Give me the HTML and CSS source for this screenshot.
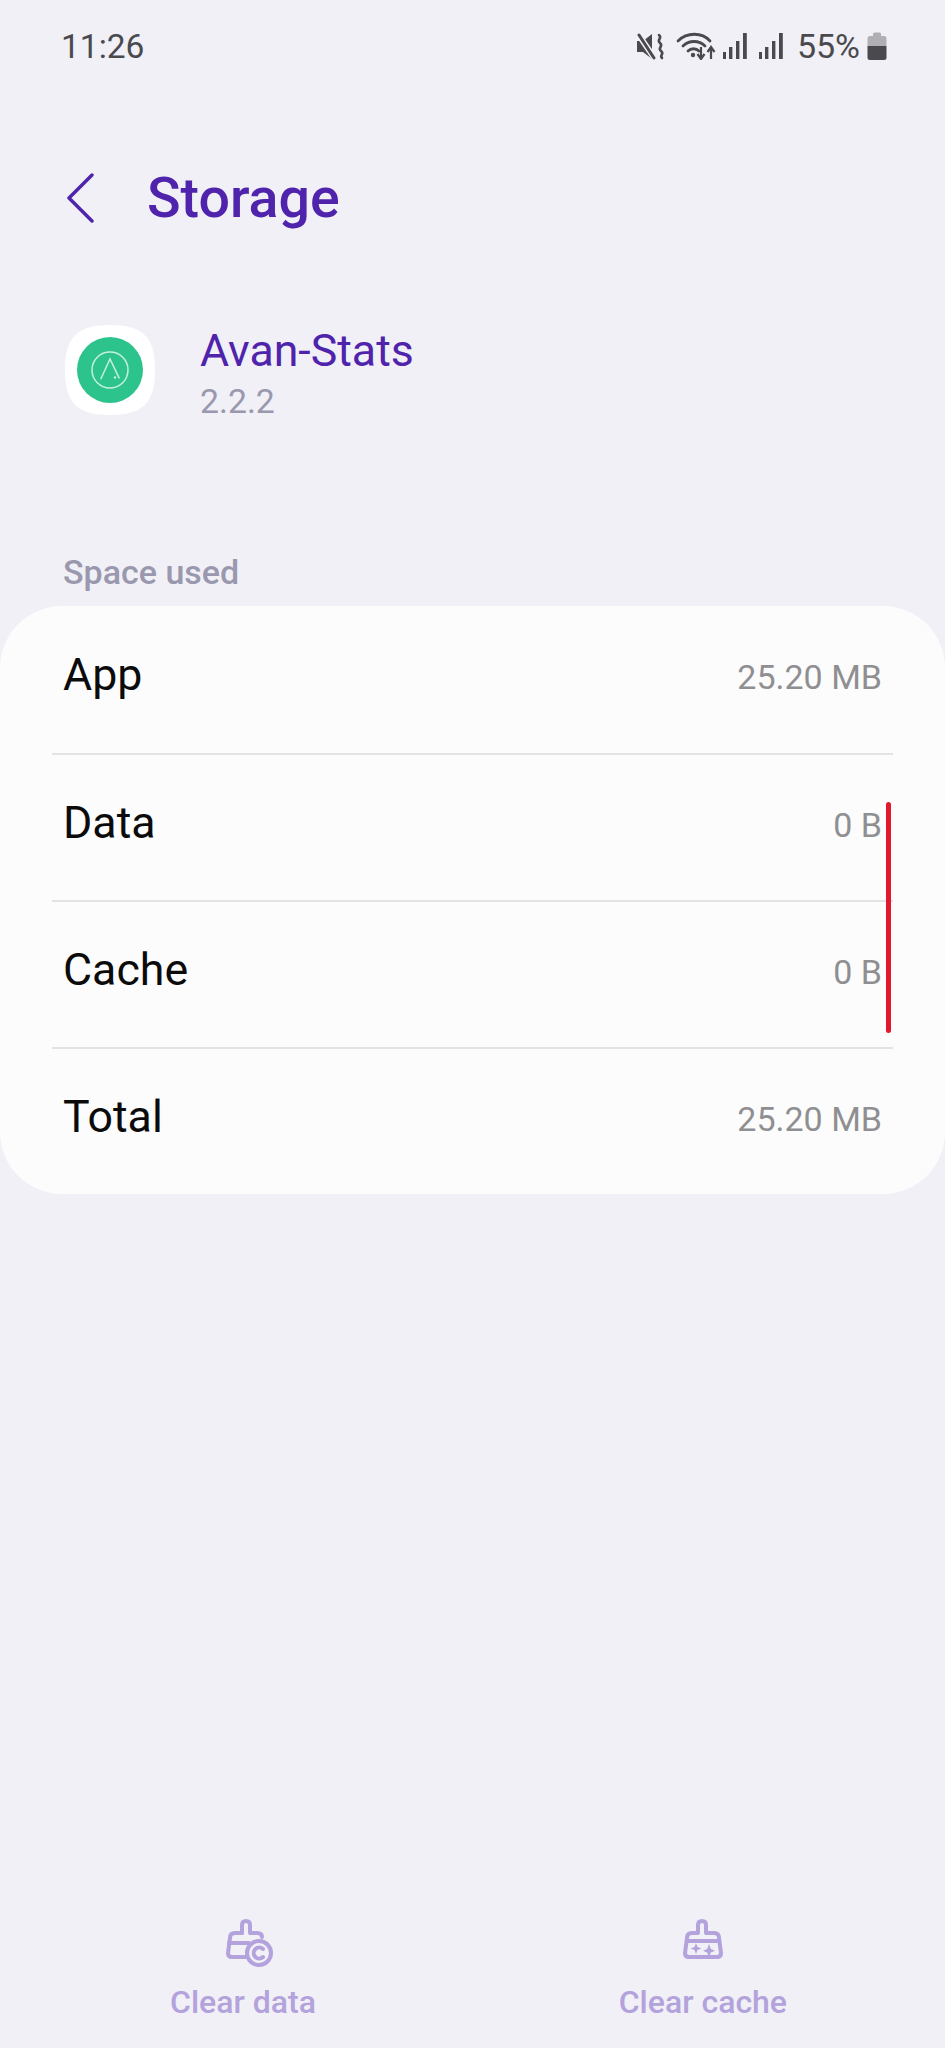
FILE: index.html
```html
<!DOCTYPE html>
<html lang="en">
<head>
    <meta charset="UTF-8">
    <title>Storage</title>
    <link rel="stylesheet" href="styles.css">
</head>
<body>
    <div class="status-bar">
        <span class="clock">11:26</span>
        <div class="status-icons">
            <svg class="icon-mute" width="28" height="27" viewBox="0 0 28 27">
                <path d="M0 8h6l9-7v25l-9-7H0z" fill="#4a4a4e"/>
                <path d="M1 1l17 25" stroke="#f0f0f6" stroke-width="6"/>
                <path d="M2 2l15 23" stroke="#4a4a4e" stroke-width="3" stroke-linecap="round"/>
                <path d="M22 2c4 3-3 5 1 8s-3 5 1 8-2 4 1 7" fill="none" stroke="#4a4a4e" stroke-width="2.600" stroke-linecap="round"/>
            </svg>
            <svg class="icon-wifi" width="40" height="28" viewBox="0 0 40 28">
                <g fill="none" stroke="#4a4a4e" stroke-width="2.800" stroke-linecap="round">
                    <path d="M2 9c9-9 24-9 32 0"/>
                    <path d="M7 14c6-6 16-6 22 0"/>
                    <path d="M12 19c3-3 8-3 11 0"/>
                </g>
                <circle cx="17" cy="23" r="2.200" fill="#4a4a4e"/>
                <path d="M25 15v11m-3.500-4l3.500 5 3.500-5M35 27V16m-3.500 4l3.500-5 3.500 5" fill="none" stroke="#4a4a4e" stroke-width="2.200"/>
            </svg>
            <svg class="icon-signal" width="24" height="26" viewBox="0 0 24 26">
                <path d="M0 19h3v7H0zM6 14h3.400v12H6zM13 8h3.400v18H13zM20 0h3.800v26H20z" fill="#4a4a4e"/>
            </svg>
            <svg class="icon-signal signal-last" width="24" height="26" viewBox="0 0 24 26">
                <path d="M0 19h3v7H0zM6 14h3.400v12H6zM13 8h3.400v18H13zM20 0h3.800v26H20z" fill="#4a4a4e"/>
            </svg>
            <span class="battery-text">55%</span>
            <svg class="icon-battery" width="20" height="28" viewBox="0 0 20 28">
                <path d="M6 2q0-1.500 1.500-1.500h5Q14 .5 14 2v2h3q2.500 0 2.500 2.500V14H.5V6.500Q.5 4 3 4h3z" fill="#b0b0b4"/>
                <path d="M.5 14h19v11.500q0 2.500-2.500 2.500H3q-2.500 0-2.500-2.500z" fill="#4a4a4e"/>
            </svg>
        </div>
    </div>

    <header class="app-bar">
        <svg class="back" width="30" height="50" viewBox="0 0 30 50">
            <path d="M26 2L3 25l23 23" fill="none" stroke="#4f23ab" stroke-width="3.400" stroke-linecap="round" stroke-linejoin="round"/>
        </svg>
        <h1>Storage</h1>
    </header>

    <section class="app-info">
        <svg class="app-icon" width="90" height="90" viewBox="0 0 90 90">
            <path d="M45 0C78 0 90 12 90 45S78 90 45 90 0 78 0 45 12 0 45 0z" fill="#fff"/>
            <circle cx="45" cy="45" r="33" fill="#2cc38c"/>
            <circle cx="45" cy="45" r="18" fill="none" stroke="#c5f0df" stroke-width="1.500"/>
            <path d="M35.700 54.300L45 34l9.300 19.300" fill="none" stroke="#c5f0df" stroke-width="1.500"/>
            <circle cx="50" cy="52.500" r="1.200" fill="#c5f0df"/>
        </svg>
        <div class="app-text">
            <div class="app-name">Avan-Stats</div>
            <div class="app-version">2.2.2</div>
        </div>
    </section>

    <h2 class="section-label">Space used</h2>

    <section class="card">
        <div class="row"><span>App</span><span class="value">25.20 MB</span></div>
        <div class="row"><span>Data</span><span class="value">0 B</span></div>
        <div class="row"><span>Cache</span><span class="value">0 B</span></div>
        <div class="row"><span>Total</span><span class="value">25.20 MB</span></div>
        <div class="scrollbar"></div>
    </section>

    <footer class="actions">
        <div class="action">
            <svg class="icon-clear" width="50" height="50" viewBox="0 0 50 50">
                <g fill="none" stroke="#b3a2dc" stroke-width="4" stroke-linecap="round" stroke-linejoin="round">
                    <path d="M19 14V6q0-4 4-4t4 4v8h7q5 0 5 4"/>
                    <path d="M19 14h-7q-5 0-5 5l-2 15q0 4 4 4h15"/>
                    <path d="M6 24h20"/>
                    <circle cx="36" cy="34" r="12"/>
                    <path d="M40 30a5.500 5.500 0 1 0 0 8"/>
                </g>
            </svg>
            <span>Clear data</span>
        </div>
        <div class="action">
            <svg width="50" height="50" viewBox="0 0 50 50">
                <g fill="none" stroke="#b3a2dc" stroke-width="4" stroke-linecap="round" stroke-linejoin="round">
                    <path d="M20 14V6q0-4 4-4t4 4v8h8q5 0 5 5l2 15q0 4-4 4H11q-4 0-4-4l2-15q0-5 5-5z"/>
                    <path d="M9 22h32"/>
                </g>
                <path d="M18 24l1.500 4 4 1.500-4 1.500-1.500 4-1.500-4-4-1.500 4-1.500zM31 25l1.800 5 4.200 1.800-4.200 1.800-1.800 5-1.800-5-4.200-1.800 4.200-1.800z" fill="#b3a2dc"/>
            </svg>
            <span>Clear cache</span>
        </div>
    </footer>
</body>
</html>
```

FILE: styles.css
```css
* {
    box-sizing: border-box;
    margin: 0;
    padding: 0;
}

body {
    font-family: Roboto, sans-serif;
    background: #f0f0f6;
    min-height: 2048px;
    display: flex;
    flex-direction: column;
}

.status-bar {
    display: flex;
    justify-content: space-between;
    align-items: center;
    height: 46px;
    margin-top: 23px;
    padding: 0 58px 0 61px;
    color: #4a4a4e;
}

.clock {
    font-size: 33.5px;
}

.status-icons {
    display: flex;
    align-items: center;
    gap: 7px;
}

.icon-mute {
    margin-right: 4px;
}

.signal-last {
    margin: 0 7px 0 5px;
}

.battery-text {
    font-size: 34px;
}

.app-bar {
    display: flex;
    align-items: center;
    gap: 51px;
    padding-left: 66px;
    margin-top: 94px;
    height: 70px;
}

.app-bar h1 {
    font-size: 55.5px;
    font-weight: 500;
    color: #4f23ab;
}

.app-info {
    display: flex;
    align-items: center;
    gap: 45px;
    padding-left: 65px;
    margin-top: 87px;
}

.app-icon {
    margin-bottom: 6px;
}

.app-text {
    padding-top: 4px;
}

.app-name {
    font-size: 44.7px;
    color: #4f23ab;
    line-height: 54px;
}

.app-version {
    font-size: 33.8px;
    color: #9a98ae;
    line-height: 48px;
}

.section-label {
    font-size: 34px;
    font-weight: 500;
    color: #9a98ae;
    padding-left: 63px;
    margin-top: 126px;
    line-height: 40px;
}

.card {
    position: relative;
    margin-top: 14px;
    background: #fcfcfd;
    border-radius: 62px;
    padding: 0 52px;
}

.row {
    display: flex;
    justify-content: space-between;
    align-items: center;
    height: 147px;
    padding: 0 11px 10px;
    font-size: 44.7px;
    color: #0b0b0b;
}

.row + .row {
    border-top: 2px solid #e3e3e6;
}

.value {
    font-size: 34px;
    color: #8f8f92;
    padding-top: 4px;
}

.scrollbar {
    position: absolute;
    right: 54px;
    top: 196px;
    width: 5px;
    height: 231px;
    border-radius: 3px;
    background: #e3182c;
}

.actions {
    margin-top: auto;
    display: flex;
    justify-content: space-between;
    padding: 0 158px 27px 170px;
}

.action {
    display: flex;
    flex-direction: column;
    align-items: center;
    gap: 14px;
    font-size: 32px;
    font-weight: 500;
    color: #b3a2dc;
}

.icon-clear {
    margin-left: 10px;
}
```
